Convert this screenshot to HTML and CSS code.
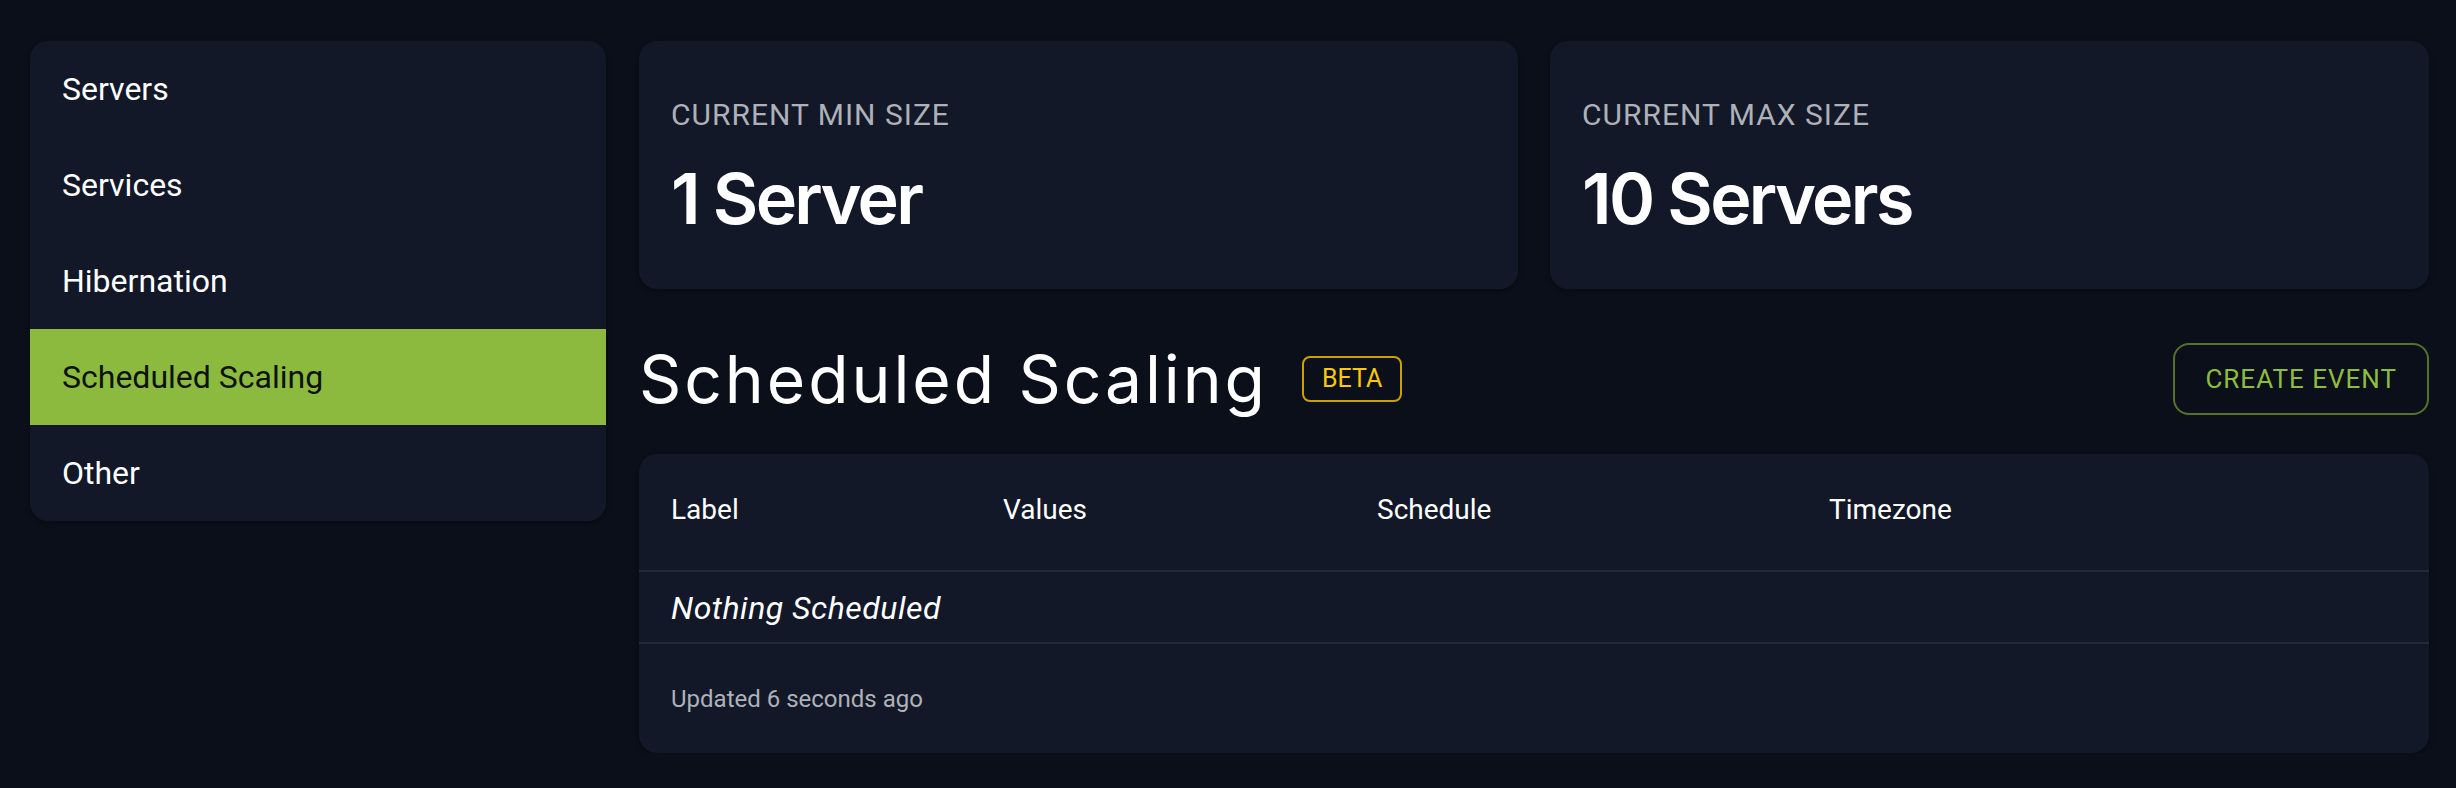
FILE: index.html
```html
<!DOCTYPE html>
<html lang="en">
<head>
<meta charset="utf-8">
<title>Scheduled Scaling</title>
<link rel="stylesheet" href="styles.css">
</head>
<body>
<div class="page">
  <nav class="sidebar">
    <div class="nav-item">Servers</div>
    <div class="nav-item">Services</div>
    <div class="nav-item">Hibernation</div>
    <div class="nav-item active">Scheduled Scaling</div>
    <div class="nav-item">Other</div>
  </nav>
  <main class="main">
    <div class="stats">
      <div class="stat-card">
        <div class="stat-label">CURRENT MIN SIZE</div>
        <div class="stat-value">1 Server</div>
      </div>
      <div class="stat-card">
        <div class="stat-label">CURRENT MAX SIZE</div>
        <div class="stat-value">10 Servers</div>
      </div>
    </div>
    <div class="section-head">
      <h1 class="section-title">Scheduled Scaling</h1>
      <span class="badge">BETA</span>
      <button class="btn-outline">CREATE EVENT</button>
    </div>
    <div class="table-card">
      <table class="events">
        <colgroup>
          <col class="c-label">
          <col class="c-values">
          <col class="c-schedule">
          <col class="c-tz">
        </colgroup>
        <thead>
          <tr><th>Label</th><th>Values</th><th>Schedule</th><th>Timezone</th></tr>
        </thead>
        <tbody>
          <tr><td class="empty" colspan="4">Nothing Scheduled</td></tr>
        </tbody>
      </table>
      <div class="updated">Updated 6 seconds ago</div>
    </div>
  </main>
</div>
</body>
</html>
```

FILE: styles.css
```css
* { box-sizing: border-box; }

html, body {
  margin: 0;
  background: #0b0f19;
  color: #ffffff;
  font-family: Roboto, "Liberation Sans", sans-serif;
}

.page {
  display: grid;
  grid-template-columns: 576px 1fr;
  column-gap: 33px;
  align-items: start;
  padding: 41px 27px 0 30px;
}

.sidebar {
  background: #121827;
  border-radius: 18px;
  overflow: hidden;
  box-shadow: 0 2px 4px rgba(0, 0, 0, 0.35);
}

.nav-item {
  padding: 24px 32px;
  font-size: 32px;
  line-height: 48px;
  color: #ffffff;
}

.nav-item.active {
  background: #8bba3f;
  color: #0d1210;
}

.main { min-width: 0; }

.stats {
  display: grid;
  grid-template-columns: 1fr 1fr;
  gap: 32px;
}

.stat-card {
  background: #121827;
  border-radius: 18px;
  padding: 54px 32px 50px;
  box-shadow: 0 2px 4px rgba(0, 0, 0, 0.35);
}

.stat-label {
  font-size: 30px;
  line-height: 40px;
  letter-spacing: 1px;
  color: #aeb1b8;
}

.stat-value {
  margin-top: 24px;
  font-family: Inter, "Open Sans", sans-serif;
  font-weight: 600;
  font-size: 70px;
  line-height: 80px;
  letter-spacing: -2.7px;
  color: #ffffff;
}

.section-head {
  display: flex;
  align-items: center;
  margin: 48px 0 33px;
}

.section-title {
  margin: 0;
  font-family: Inter, "Open Sans", sans-serif;
  font-weight: 400;
  font-size: 66px;
  line-height: 84px;
  letter-spacing: 2.9px;
  color: #ffffff;
}

.badge {
  margin-left: 34px;
  height: 46px;
  padding: 0 18px;
  border: 2px solid #c9a100;
  border-radius: 8px;
  font-size: 25px;
  line-height: 42px;
  color: #ffc808;
}

.btn-outline {
  margin-left: auto;
  height: 72px;
  padding: 0 30px;
  border: 2px solid #55722b;
  border-radius: 16px;
  background: transparent;
  font-family: Roboto, "Liberation Sans", sans-serif;
  font-size: 26px;
  line-height: 68px;
  letter-spacing: 1px;
  color: #8cbd40;
}

.table-card {
  background: #121827;
  border-radius: 18px;
  overflow: hidden;
  box-shadow: 0 2px 4px rgba(0, 0, 0, 0.35);
}

.events {
  width: 100%;
  border-collapse: collapse;
  table-layout: fixed;
}

.c-label { width: 332px; }
.c-values { width: 374px; }
.c-schedule { width: 452px; }

.events th {
  padding: 34px 32px 38px;
  font-size: 28px;
  line-height: 44px;
  font-weight: 400;
  text-align: left;
  color: #ffffff;
  border-bottom: 2px solid #232a37;
}

.events td.empty {
  padding: 14px 32px 12px;
  font-size: 32px;
  line-height: 44px;
  font-style: italic;
  letter-spacing: 0.5px;
  color: #ffffff;
  border-bottom: 2px solid #232a37;
}

.updated {
  padding: 37px 32px 36px;
  font-size: 24px;
  line-height: 36px;
  color: #aeb1b8;
}
```
